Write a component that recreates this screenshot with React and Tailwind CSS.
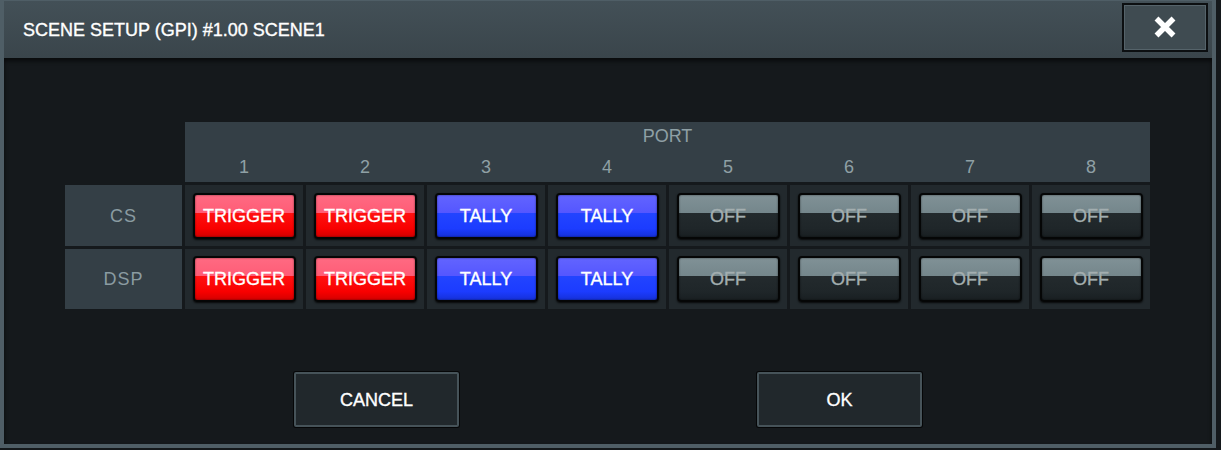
import React from 'react';

const FONT = "font-['Liberation_Sans',Arial,sans-serif]";

const ports = [1, 2, 3, 4, 5, 6, 7, 8];

const rows = [
  { label: 'CS', modes: ['TRIGGER', 'TRIGGER', 'TALLY', 'TALLY', 'OFF', 'OFF', 'OFF', 'OFF'] },
  { label: 'DSP', modes: ['TRIGGER', 'TRIGGER', 'TALLY', 'TALLY', 'OFF', 'OFF', 'OFF', 'OFF'] },
];

const modeStyle = {
  TRIGGER:
    'bg-[linear-gradient(to_bottom,#ff6a82_0%,#ff5c76_44%,#ff1010_44%,#f80000_80%,#d40000_100%)] text-white',
  TALLY:
    'bg-[linear-gradient(to_bottom,#6264ff_0%,#5456ff_44%,#2244ff_44%,#1c3cff_80%,#1530d8_100%)] text-white',
  OFF:
    'bg-[linear-gradient(to_bottom,#809196_0%,#74868b_44%,#232a2d_44%,#1f2629_80%,#191f22_100%)] text-[#a3aeb0]',
};

const PortButton = ({ mode }) => (
  <button
    className={`w-[103px] h-[46px] rounded-[4px] border-2 border-[#050606] flex items-center justify-center text-[18px] leading-none [-webkit-text-stroke:0.35px] shadow-[0_1px_2px_rgba(0,0,0,0.8),inset_0_0_2px_rgba(0,0,0,0.6)] ${modeStyle[mode]}`}
  >
    {mode}
  </button>
);

const CloseIcon = () => (
  <svg width="24" height="24" viewBox="0 0 24 24">
    <path d="M3.5 3.5 L20.5 20.5 M20.5 3.5 L3.5 20.5" stroke="#ffffff" strokeWidth="5.5" strokeLinecap="butt" />
  </svg>
);

export default function App() {
  return (
    <div className={`w-[1221px] h-[450px] bg-[#14181b] overflow-hidden ${FONT}`}>
      <div className="w-[1216px] h-[448px] flex flex-col border-x-4 border-b-4 border-t border-[#4f5e66] bg-[#3d484e]">
        {/* title bar */}
        <div className="h-[57px] flex items-center justify-between pl-[19px] pr-[4px] bg-[linear-gradient(to_bottom,#435057,#3a454b)]">
          <span className="text-white text-[18px] leading-none [-webkit-text-stroke:0.35px]">SCENE SETUP (GPI) #1.00 SCENE1</span>
          <button className="w-[86px] h-[49px] mb-[5px] flex items-center justify-center bg-[#3f4b51] border-2 border-[#0c0f11] shadow-[inset_0_0_0_1px_#55636a]">
            <CloseIcon />
          </button>
        </div>

        {/* body */}
        <div className="flex-1 bg-[#15191c] shadow-[inset_0_3px_4px_rgba(0,0,0,0.6)] flex flex-col pt-[64px] pl-[61px]">
          <div className="grid grid-cols-[117px_repeat(8,118px)] gap-[3px] w-max">
            <div />
            <div className="col-span-8 h-[60px] bg-[#343f46] flex flex-col">
              <div className="h-[29px] flex items-end justify-center text-[#8fa0a5] text-[18px] leading-none pb-[6px]">
                PORT
              </div>
              <div className="grid grid-cols-[repeat(8,118px)] gap-[3px] flex-1">
                {ports.map((p) => (
                  <div key={p} className="flex items-center justify-center text-[#8fa0a5] text-[18px] leading-none">
                    {p}
                  </div>
                ))}
              </div>
            </div>

            {rows.map((row, ri) => (
              <React.Fragment key={row.label}>
                <div
                  className={`${ri === 0 ? 'h-[61px]' : 'h-[60px]'} bg-[#343f46] flex items-center justify-center text-[#8a9ba1] text-[18px] leading-none tracking-[1px]`}
                >
                  {row.label}
                </div>
                {row.modes.map((m, i) => (
                  <div key={i} className="bg-[#22292d] flex items-center justify-center">
                    <PortButton mode={m} />
                  </div>
                ))}
              </React.Fragment>
            ))}
          </div>

          <div className="mt-[63px] flex justify-center gap-[298px] pr-[61px]">
            {['CANCEL', 'OK'].map((t) => (
              <button
                key={t}
                className="w-[165px] h-[55px] bg-[#21282c] border-2 border-[#465359] shadow-[0_0_0_1px_#050607] rounded-[2px] text-white text-[18px] leading-none [-webkit-text-stroke:0.35px] flex items-center justify-center"
              >
                {t}
              </button>
            ))}
          </div>
        </div>
      </div>
    </div>
  );
}
